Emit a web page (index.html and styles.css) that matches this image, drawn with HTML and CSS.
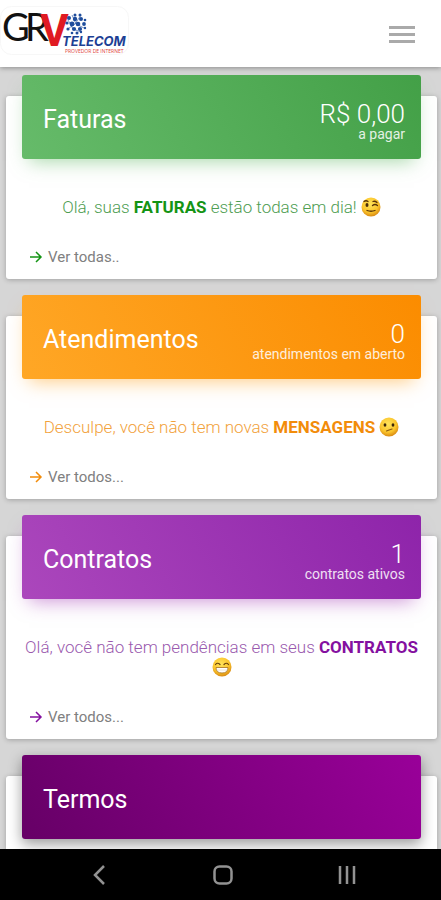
FILE: index.html
```html
<!DOCTYPE html>
<html lang="pt-BR">
<head>
<meta charset="utf-8">
<meta name="viewport" content="width=device-width, initial-scale=1">
<title>GRV Telecom</title>
<link rel="stylesheet" href="styles.css">
</head>
<body>
<svg class="defs" width="0" height="0" aria-hidden="true">
  <defs>
    <radialGradient id="face" cx="45%" cy="35%" r="65%">
      <stop offset="0" stop-color="#ffe45c"/>
      <stop offset="0.65" stop-color="#fbc52c"/>
      <stop offset="1" stop-color="#d98a12"/>
    </radialGradient>
    <symbol id="arrow" viewBox="0 0 14 14">
      <path d="M1 7h11M7 2l5 5-5 5" fill="none" stroke="currentColor" stroke-width="1.5"/>
    </symbol>
  </defs>
</svg>
<header class="topbar">
  <a class="brand" href="#" aria-label="GRV Telecom">
    <svg class="logo" viewBox="0 0 130 56" width="130" height="56">
      <rect x="0.5" y="6.500" width="128" height="48" rx="11" fill="none" stroke="#f7f7f7"/>
      <text class="logo-gr" x="2" y="41">G</text>
      <text class="logo-gr" x="25" y="41">R</text>
      <text class="logo-v" x="40" y="46">V</text>
      <g fill="#1f4d9c">
        <circle cx="75" cy="15" r="1.500"/><circle cx="80" cy="15" r="1.500"/>
        <circle cx="69" cy="18" r="2"/><circle cx="75" cy="19" r="2.200"/><circle cx="81" cy="19" r="2"/><circle cx="85" cy="20" r="1.300"/>
        <circle cx="67" cy="23" r="1.600"/><circle cx="72" cy="24" r="2.400"/><circle cx="78" cy="24" r="2.300"/><circle cx="84" cy="24" r="1.900"/>
        <circle cx="68" cy="29" r="1.600"/><circle cx="74" cy="29" r="2.100"/><circle cx="80" cy="29" r="2.100"/><circle cx="85" cy="28" r="1.200"/>
        <circle cx="72" cy="33" r="1.300"/><circle cx="77" cy="33" r="1.500"/><circle cx="81" cy="32" r="1.200"/>
      </g>
      <path d="M68 20l5 9 8 3M72 15l4 9 8 4M81 15l-6 9-6 4" fill="none" stroke="#1f4d9c" stroke-width="0.600"/>
      <text class="logo-telecom" x="62" y="46">TELECOM</text>
      <text class="logo-tag" x="65" y="53">PROVEDOR DE INTERNET</text>
    </svg>
  </a>
  <button class="menu" type="button" aria-label="Menu"><span></span><span></span><span></span></button>
</header>

<main class="content">
  <section class="card green">
    <div class="card-head">
      <h2>Faturas</h2>
      <p class="stat"><span class="value">R$ 0,00</span><span class="label">a pagar</span></p>
    </div>
    <p class="message">Olá, suas <strong>FATURAS</strong> estão todas em dia!
      <svg class="emoji" viewBox="0 0 20 20" role="img" aria-label="Piscadela">
        <circle cx="10" cy="10" r="9.500" fill="url(#face)"/>
        <ellipse cx="6" cy="8" rx="1.500" ry="1.900" fill="#4a2c08"/>
        <path d="M3 4.500q2-1.500 4 0M11.500 8.500q2.500-2 5 0M12 4.500q2-.8 4 1M6 13.500q4 1.500 8 0" fill="none" stroke="#5a3408" stroke-width="1.300" stroke-linecap="round"/>
      </svg>
    </p>
    <a class="more" href="#"><svg class="arrow" aria-hidden="true"><use href="#arrow"/></svg>Ver todas..</a>
  </section>

  <section class="card orange">
    <div class="card-head">
      <h2>Atendimentos</h2>
      <p class="stat"><span class="value">0</span><span class="label">atendimentos em aberto</span></p>
    </div>
    <p class="message">Desculpe, você não tem novas <strong>MENSAGENS</strong>
      <svg class="emoji" viewBox="0 0 20 20" role="img" aria-label="Rosto confuso">
        <circle cx="10" cy="10" r="9.500" fill="url(#face)"/>
        <ellipse cx="6" cy="8" rx="1.400" ry="1.700" fill="#3c260a"/>
        <ellipse cx="14" cy="8" rx="1.400" ry="1.700" fill="#3c260a"/>
        <path d="M7.500 14q2.500-1 5.500-2" fill="none" stroke="#8a5a14" stroke-width="1.200" stroke-linecap="round"/>
      </svg>
    </p>
    <a class="more" href="#"><svg class="arrow" aria-hidden="true"><use href="#arrow"/></svg>Ver todos...</a>
  </section>

  <section class="card purple">
    <div class="card-head">
      <h2>Contratos</h2>
      <p class="stat"><span class="value">1</span><span class="label">contratos ativos</span></p>
    </div>
    <p class="message">Olá, você não tem pendências em seus <strong>CONTRATOS</strong>
      <svg class="emoji" viewBox="0 0 20 20" role="img" aria-label="Sorriso">
        <circle cx="10" cy="10" r="9.500" fill="url(#face)"/>
        <path d="M3.500 7.500q2-2.500 4.500 0M12 7.500q2.500-2.500 4.500 0" fill="none" stroke="#6b430c" stroke-width="1.200" stroke-linecap="round"/>
        <path d="M4 10.500h12q0 5.500-6 5.500t-6-5.500z" fill="#fff" stroke="#a8701a" stroke-width="0.800"/>
        <path d="M4.500 13h11" stroke="#d8c9a8" stroke-width="0.500"/>
      </svg>
    </p>
    <a class="more" href="#"><svg class="arrow" aria-hidden="true"><use href="#arrow"/></svg>Ver todos...</a>
  </section>

  <section class="card plum">
    <div class="card-head">
      <h2>Termos</h2>
    </div>
  </section>
</main>

<nav class="navbar" aria-label="Sistema">
  <button type="button" aria-label="Voltar"><svg viewBox="0 0 24 24"><path d="M17 3l-9 9 9 9"/></svg></button>
  <button type="button" aria-label="Início"><svg viewBox="0 0 24 24"><rect x="3.500" y="3.500" width="17" height="17" rx="5"/></svg></button>
  <button type="button" aria-label="Recentes"><svg viewBox="0 0 24 24"><path d="M5 3v18M12 3v18M19 3v18"/></svg></button>
</nav>
</body>
</html>
```

FILE: styles.css
```css
* { box-sizing: border-box; }

body {
  margin: 0;
  height: 100vh;
  display: flex;
  flex-direction: column;
  background: #d6d6d6;
  font-family: Roboto, "Liberation Sans", sans-serif;
  font-weight: 300;
}

h2, p { margin: 0; }

button {
  border: 0;
  padding: 0;
  background: none;
}

.defs { position: absolute; }

.topbar {
  flex: none;
  display: flex;
  align-items: flex-start;
  justify-content: space-between;
  height: 67px;
  padding-right: 26px;
  background: #fff;
  box-shadow: 0 1px 5px rgba(0, 0, 0, 0.35);
  z-index: 1;
}

.logo { display: block; }

.logo-gr { font: 400 38px Lato, sans-serif; fill: #111; }
.logo-v { font: 700 44px Roboto, sans-serif; fill: #e01a22; }
.logo-telecom { font: italic 700 13px Inter, sans-serif; fill: #1c3f94; }
.logo-tag { font: 400 5px "Open Sans", sans-serif; fill: #e0423c; }

.menu {
  display: flex;
  flex-direction: column;
  gap: 4px;
  width: 26px;
  margin-top: 26px;
}

.menu span {
  height: 3px;
  background: #aaa;
}

.content {
  flex: 1;
  min-height: 0;
  overflow: hidden;
  display: flex;
  flex-direction: column;
  gap: 37px;
  padding: 29px 4px 0 6px;
}

.card {
  flex: none;
  padding: 0 16px 12px;
  border-radius: 3px;
  background: #fff;
  box-shadow: 0 1px 5px rgba(0, 0, 0, 0.25);
}

.card-head {
  display: flex;
  justify-content: space-between;
  align-items: center;
  height: 84px;
  margin-top: -21px;
  padding: 0 16px 0 21px;
  border-radius: 3px;
  color: #fff;
}

.card-head h2 {
  font-size: 25px;
  line-height: 30px;
  font-weight: 400;
  padding-top: 6px;
}

.stat {
  display: flex;
  flex-direction: column;
  align-items: flex-end;
}

.value { font-size: 26px; line-height: 26px; padding-top: 8px; }
.label { font-size: 14px; line-height: 14px; font-weight: 400; opacity: 0.85; }

.message {
  margin-top: 38px;
  font-size: 17px;
  line-height: 20px;
  text-align: center;
  color: var(--soft);
}

.message strong { font-weight: 700; color: var(--strong); }

.emoji {
  width: 20px;
  height: 20px;
  vertical-align: -4px;
}

.more {
  display: flex;
  align-items: center;
  gap: 5px;
  margin: 30px 0 0 7px;
  font-size: 15px;
  line-height: 20px;
  font-weight: 400;
  color: #808080;
  text-decoration: none;
}

.arrow {
  width: 14px;
  height: 14px;
  color: var(--strong);
}

.green { --soft: #4e9d52; --strong: #149414; }
.orange { --soft: #f2a23c; --strong: #f28c0a; }
.purple { --soft: #9a5aae; --strong: #8410a0; }

.green .card-head { background: linear-gradient(60deg, #66bb6a, #43a047); box-shadow: 0 9px 18px -7px rgba(76, 175, 80, 0.5); }
.orange .card-head { background: linear-gradient(60deg, #ffa726, #fb8c00); box-shadow: 0 9px 18px -7px rgba(255, 152, 0, 0.5); }
.purple .card-head { background: linear-gradient(60deg, #ab47bc, #8e24aa); box-shadow: 0 9px 18px -7px rgba(156, 39, 176, 0.5); }
.plum .card-head { background: linear-gradient(60deg, #660066, #990099); box-shadow: 0 5px 14px rgba(0, 0, 0, 0.4); }

.navbar {
  flex: none;
  display: flex;
  justify-content: space-between;
  align-items: center;
  height: 51px;
  padding: 0 82px 0 87px;
  background: #000;
  z-index: 1;
}

.navbar svg {
  display: block;
  width: 24px;
  height: 24px;
  fill: none;
  stroke: #929292;
  stroke-width: 2.500;
}
```
